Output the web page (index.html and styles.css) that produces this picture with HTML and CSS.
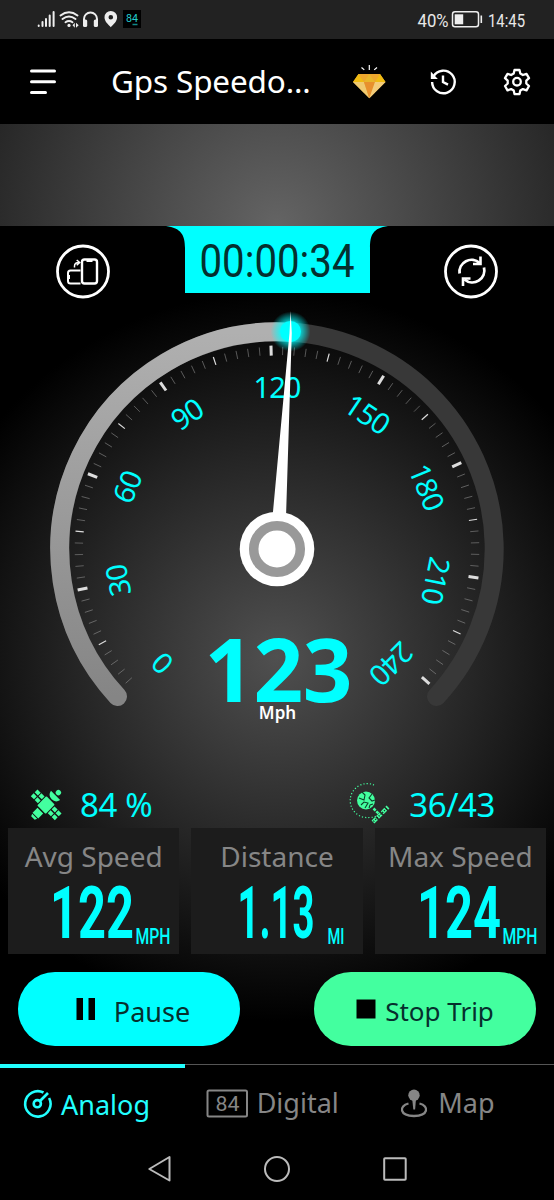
FILE: index.html
```html
<!DOCTYPE html>
<html lang="en">
<head>
    <meta charset="UTF-8">
    <meta name="viewport" content="width=device-width, initial-scale=1.0">
    <title>Gps Speedometer</title>
    <link rel="stylesheet" href="styles.css">
</head>
<body>
    <!-- Status bar -->
    <div class="status-bar">
        <svg class="status-icons" width="106" height="20" viewBox="36 9 106 20">
            <g stroke="#eee" stroke-width="2" stroke-linecap="round">
                <path d="M38.700 26v-.6M42.500 26v-4M46 26v-7M49.700 26v-10.500M53.600 26v-14"/>
            </g>
            <g fill="none" stroke="#eee" stroke-width="2" stroke-linecap="round">
                <path d="M60.500 15.500q8.500-6.500 17 0M62.500 19q6.500-5 13 0M65.500 22.200q3.500-2.400 7 0"/>
                <path d="M84 22v-3a6.500 6.500 0 0 1 13 0v3"/>
            </g>
            <circle cx="69" cy="25.400" r="1.600" fill="#eee"/>
            <path d="M74.800 22.800l-2.300 2.500 2.300 2.500zM76 22.800l2.700 2.500-2.700 2.500z" fill="#eee"/>
            <rect x="83" y="19.500" width="4.200" height="7.500" rx="1.600" fill="#eee"/>
            <rect x="93.800" y="19.500" width="4.200" height="7.500" rx="1.600" fill="#eee"/>
            <path fill-rule="evenodd" d="M110.800 11a6.300 6.300 0 0 1 6.300 6.300c0 4-3.500 7-6.300 10-2.800-3-6.300-6-6.300-10a6.300 6.300 0 0 1 6.300-6.300zm0 4a2.300 2.300 0 1 0 0 4.600 2.300 2.300 0 0 0 0-4.600z" fill="#eee"/>
            <rect x="123" y="10" width="18" height="18" fill="#000"/>
            <text class="seg" x="126" y="22" font-size="11" textLength="12" lengthAdjust="spacingAndGlyphs" fill="#2cc">84</text>
            <path d="M132.500 24.500h5" stroke="#188" stroke-width="1.500"/>
        </svg>
        <div class="status-right">
            <svg width="109" height="22" viewBox="416 9 109 22">
                <text x="417.500" y="26.500" textLength="31" lengthAdjust="spacingAndGlyphs">40%</text>
                <rect x="452.500" y="11.800" width="26" height="15" rx="2.500" fill="none" stroke="#eee" stroke-width="1.500"/>
                <rect x="454.700" y="14.300" width="8.500" height="10" fill="#eee"/>
                <path d="M481.300 15.500v7.500" stroke="#eee" stroke-width="1.600"/>
                <text x="488" y="26.500" textLength="37" lengthAdjust="spacingAndGlyphs">14:45</text>
            </svg>
        </div>
    </div>

    <!-- App bar -->
    <header class="app-bar">
        <svg width="28" height="28" viewBox="29 68 28 28" stroke="#fff" stroke-width="3" stroke-linecap="round">
            <path d="M31.500 71h23M31.500 81.700h23M31.500 92.400h14"/>
        </svg>
        <h1>Gps Speedo...</h1>
        <svg width="34" height="36" viewBox="352 64 34 36">
            <path d="M361.500 67.500l2.800 2.400M369.300 65v5M377 67.500l-2.800 2.400" stroke="#fff" stroke-width="1.200"/>
            <path d="M358.500 74h21.500l5.500 8-16.200 16.300L353 82z" fill="#e2a83a"/>
            <path d="M358.500 74h10.800l-5.300 8zM369.300 74h10.700l-5 8z" fill="#eda62d"/>
            <path d="M358.500 74l5.500 8h-11zM380 74l-5 8h10.500z" fill="#f0bb12"/>
            <path d="M369.300 74l5.700 8h-11z" fill="#e8b62b"/>
            <path d="M353 82h11l5.300 16.300z" fill="#f0ca70"/>
            <path d="M364 82h11l-5.700 16.300z" fill="#e8902d"/>
            <path d="M375 82h10.500l-16.200 16.300z" fill="#f3cc7a"/>
        </svg>
        <svg width="28" height="28" viewBox="429 68 28 28" fill="none" stroke="#fff" stroke-width="2.400">
            <path d="M433.500 76.500a11.300 11.300 0 1 1-1.400 5.500M443 75.500v6.500l5 2.600"/>
            <path d="M430.800 71.500v7.500h7z" fill="#fff" stroke="none"/>
        </svg>
        <svg width="30" height="30" viewBox="502 67 30 30" fill="none" stroke="#fff" stroke-width="2.300" stroke-linejoin="round">
            <path d="M514.500 70h5l.8 3.500 2.600 1.500 3.600-1.200 2.500 4.300-2.700 2.500v2.900l2.700 2.500-2.500 4.300-3.600-1.200-2.600 1.500-.8 3.500h-5l-.8-3.500-2.600-1.500-3.600 1.200-2.500-4.300 2.700-2.500v-2.900l-2.700-2.500 2.500-4.300 3.600 1.200 2.600-1.500z"/>
            <circle cx="517" cy="81.700" r="3.800"/>
        </svg>
    </header>

    <div class="banner"></div>

    <main class="dashboard">
        <!-- Timer and round buttons -->
        <div class="top-row">
            <svg class="round-btn" width="56" height="56" viewBox="55 244 56 56" fill="none" stroke="#fff" stroke-width="2">
                <circle cx="83" cy="271.500" r="25.500" stroke-width="2.800"/>
                <rect x="82" y="259.500" width="15" height="24" rx="2.500" stroke-width="2.400"/>
                <path d="M86.500 260.800h6" stroke-width="2.400"/>
                <path d="M80.500 270.500h-10a2.500 2.500 0 0 0-2.500 2.500v8a2.500 2.500 0 0 0 2.500 2.500h10M69 275v4"/>
                <path d="M74.500 267.500v-1.500q0-3.500 4.500-3.500M76.700 260l3 2.500-3 2.700" stroke-width="1.500"/>
            </svg>
            <div class="timer">
                <svg width="156" height="44" viewBox="199 238 156 44">
                    <text class="seg" x="199.500" y="276.500" font-size="47" textLength="155" lengthAdjust="spacingAndGlyphs" fill="#04302f">00:00:34</text>
                </svg>
            </div>
            <svg class="round-btn" width="56" height="56" viewBox="443 244 56 56" fill="none" stroke="#fff" stroke-width="2.800">
                <circle cx="471" cy="271.500" r="25.500"/>
                <path d="M459.600 273.500a12 12 0 0 1 20-10.500M484 267.500a12 12 0 0 1-19.500 12"/>
                <path d="M480.500 256.500v7.500h-7.500M463 286v-7.500h7.500" stroke-width="2.600"/>
            </svg>
        </div>

        <!-- Analog dial -->
        <svg class="dial" width="554" height="480" viewBox="0 300 554 480">
            <defs>
                <linearGradient id="arcFill" x1="0" y1="0" x2="0" y2="1">
                    <stop offset="0" stop-color="#b0b0b0"/>
                    <stop offset="1" stop-color="#858585"/>
                </linearGradient>
                <radialGradient id="glow">
                    <stop offset=".5" stop-color="#00ffff" stop-opacity=".75"/>
                    <stop offset="1" stop-color="#00ffff" stop-opacity="0"/>
                </radialGradient>
            </defs>
            <path d="M117.500 696.500A217.200 217.200 0 1 1 436.500 696.500" class="track"/>
            <path d="M117.500 696.500A217.200 217.200 0 0 1 290 332.200" class="progress"/>
            <g id="ticks"></g>
            <g id="labels"></g>
            <circle cx="290.500" cy="331.500" r="20" fill="url(#glow)"/>
            <circle cx="290.500" cy="331.500" r="10.500" fill="#00ffff"/>
            <path d="M290.600 311l1.200 22-5.800 184h-13.500l17-184z" fill="#fff"/>
            <circle cx="277" cy="549" r="37.300" fill="#fff"/>
            <circle cx="277" cy="549" r="23.300" fill="#fff" stroke="#999" stroke-width="9.500"/>
            <text class="speed" x="278.500" y="702" textLength="148">123</text>
            <text class="speed-unit" x="277.500" y="718.500">Mph</text>
        </svg>

        <!-- Satellite status -->
        <div class="satellites">
            <div class="sat-item">
                <svg width="32" height="32" viewBox="30 787 32 32" fill="#43ff9f">
                    <g transform="rotate(45 46 804)">
                        <path d="M29 799h4.500v4h-4.500zM34.500 799h4.500v4h-4.500zM29 804.500h4.500v4h-4.500zM34.500 804.500h4.500v4h-4.500z"/>
                        <path d="M53 799h4.500v4h-4.500zM58.500 799h4.500v4h-4.500zM53 804.500h4.500v4h-4.500zM58.500 804.500h4.500v4h-4.500z"/>
                        <rect x="40" y="797.500" width="12" height="13" rx="1"/>
                        <path d="M42 812h8v7h-8zM42.500 820h7l-1 2.500h-5zM39.500 790.500h13q-1 5.500-6.500 5.500t-6.500-5.500z"/>
                        <circle cx="46" cy="786.500" r="2.700"/>
                    </g>
                </svg>
                <span>84 %</span>
            </div>
            <div class="sat-item">
                <svg width="44" height="46" viewBox="345 779 44 46" fill="none" stroke="#43ff9f">
                    <path d="M372 783a17 17 0 1 0-5 32.500q6 0 8-2" stroke-width="1.200" stroke-dasharray="1.200 2"/>
                    <circle cx="364" cy="798.500" r="9" fill="#43ff9f" stroke="none"/>
                    <path d="M357 796l5 2 1-5-3-3M370 792l-3 4 3 3 3-1M359 803l3-3 4 1-3 5M367 806l1-3 3-1" stroke="#0d4029" stroke-width="1.100"/>
                    <path d="M371.500 806.500l6 6" stroke-width="2.500" stroke-dasharray="3 1"/>
                    <path d="M371 820l15-15" stroke-width="4" stroke-dasharray="5 1.500"/>
                    <path d="M371.500 819.500l14-14" stroke="#0e2219" stroke-width="1.500" stroke-dasharray="1 1.500"/>
                </svg>
                <span>36/43</span>
            </div>
        </div>

        <!-- Trip stats -->
        <div class="cards">
            <div class="card">
                <h2>Avg Speed</h2>
                <svg width="171" height="76" viewBox="8 878 171 76">
                    <text class="seg bold" x="50" y="938" textLength="84" lengthAdjust="spacingAndGlyphs">122</text>
                    <text class="seg unit" x="135.500" y="944" textLength="35" lengthAdjust="spacingAndGlyphs">MPH</text>
                </svg>
            </div>
            <div class="card">
                <h2>Distance</h2>
                <svg width="171" height="76" viewBox="191.500 878 171 76">
                    <text class="seg bold" x="238" y="938" textLength="77" lengthAdjust="spacingAndGlyphs">1.13</text>
                    <text class="seg unit" x="328" y="944" textLength="17" lengthAdjust="spacingAndGlyphs">MI</text>
                </svg>
            </div>
            <div class="card">
                <h2>Max Speed</h2>
                <svg width="171" height="76" viewBox="375 878 171 76">
                    <text class="seg bold" x="417" y="938" textLength="84" lengthAdjust="spacingAndGlyphs">124</text>
                    <text class="seg unit" x="502.500" y="944" textLength="35" lengthAdjust="spacingAndGlyphs">MPH</text>
                </svg>
            </div>
        </div>

        <div class="actions">
            <button class="btn pause">
                <svg width="20" height="22" viewBox="0 0 20 22"><path d="M.5 0h6.500v22H.5zM12.500 0h6.500v22h-6.500z"/></svg>
                <span>Pause</span>
            </button>
            <button class="btn stop">
                <svg width="20" height="20" viewBox="0 0 20 20"><path d="M.5.5h19v19H.5z"/></svg>
                <span>Stop Trip</span>
            </button>
        </div>
    </main>

    <!-- Bottom tabs -->
    <nav class="tabs">
        <a class="tab active">
            <svg width="30" height="30" viewBox="22 1087 30 30" fill="none" stroke="currentColor" stroke-width="2.600">
                <path d="M43.500 1090.500a12.700 12.700 0 1 0 5.600 5.500"/>
                <circle cx="37.300" cy="1101.700" r="3.600"/>
                <path d="M40 1099l8-8"/>
            </svg>
            <span>Analog</span>
        </a>
        <a class="tab">
            <svg width="42" height="28" viewBox="206 1087 42 28">
                <rect x="207.500" y="1088.500" width="39.500" height="26" rx="1.500" fill="none" stroke="currentColor" stroke-width="2"/>
                <text class="seg" x="215.500" y="1108.700" font-size="20.500" textLength="24" lengthAdjust="spacingAndGlyphs" fill="currentColor">84</text>
            </svg>
            <span>Digital</span>
        </a>
        <a class="tab">
            <svg width="30" height="30" viewBox="400 1086 30 30" fill="none" stroke="currentColor">
                <circle cx="415" cy="1093.300" r="5.700" fill="currentColor" stroke="none"/>
                <path d="M413.200 1097h3.800l-.9 10.500h-1.800z" fill="currentColor" stroke="none"/>
                <path d="M409.500 1101.500c-10 2.500-9 12.500 5.500 12.500s15.500-10 5.500-12.500" stroke-width="2.300"/>
            </svg>
            <span>Map</span>
        </a>
    </nav>

    <!-- System navigation -->
    <div class="system-nav">
        <svg width="24" height="28" viewBox="0 0 24 28"><path d="M22.500 2v23.500L2.300 14z"/></svg>
        <svg width="28" height="28" viewBox="0 0 28 28"><circle cx="14" cy="14" r="12"/></svg>
        <svg width="24" height="28" viewBox="0 0 24 28"><rect x="1.200" y="3.200" width="21.500" height="21.500" rx=".8"/></svg>
    </div>

    <script>
        var SVG_NS = 'http://www.w3.org/2000/svg';
        var cx = 277, cy = 549;

        // Scale marks, one every 3 mph
        var ticks = document.getElementById('ticks');
        for (var i = 1; i <= 80; i++) {
            var kind = i % 10 === 0 ? 'major' : (i % 5 === 0 ? 'mid' : 'minor');
            var line = document.createElementNS(SVG_NS, 'line');
            line.setAttribute('x1', cx);
            line.setAttribute('x2', cx);
            line.setAttribute('y1', cy - (kind === 'major' ? 203.5 : 202.3));
            line.setAttribute('y2', cy - (kind === 'major' ? 193.5 : 194));
            line.setAttribute('class', 'tick ' + kind);
            line.setAttribute('transform', 'rotate(' + (-134.9 + i * 3.33) + ' ' + cx + ' ' + cy + ')');
            ticks.appendChild(line);
        }

        // Numbers 0 - 240
        var labels = document.getElementById('labels');
        for (var n = 0; n <= 8; n++) {
            var text = document.createElementNS(SVG_NS, 'text');
            text.textContent = n * 30;
            text.setAttribute('x', cx);
            text.setAttribute('y', 397.5);
            text.setAttribute('class', 'label');
            text.setAttribute('transform', 'rotate(' + (n - 4) * 33.75 + ' ' + cx + ' ' + cy + ')');
            labels.appendChild(text);
        }
    </script>
</body>
</html>
```
FILE: styles.css
```css
* {
    box-sizing: border-box;
}

body {
    margin: 0;
    width: 554px;
    height: 1200px;
    overflow: hidden;
    background-color: #000;
    color: #fff;
    font-family: "Noto Sans", sans-serif;
}

svg {
    display: block;
    flex: none;
    overflow: visible;
}

h1, h2 {
    margin: 0;
    font-weight: 400;
}

.status-bar {
    display: flex;
    justify-content: space-between;
    height: 39px;
    padding: 9px 29px 0 36px;
    background-color: #222;
}

.status-right text {
    font-family: Roboto, sans-serif;
    font-size: 19px;
    fill: #e8e8e8;
}

.app-bar {
    display: flex;
    align-items: center;
    height: 85px;
    padding: 0 22px 0 29px;
}

.app-bar h1 {
    width: 241px;
    margin-left: 54px;
    padding-bottom: 2px;
    font-size: 31.5px;
    letter-spacing: -0.15px;
    line-height: 40px;
    white-space: nowrap;
}

.app-bar h1 + svg + svg {
    margin-left: 43px;
}

.app-bar svg:last-child {
    margin-left: auto;
}

.banner {
    height: 102px;
    background: radial-gradient(circle 330px at 277px 102px, #646464, #202020);
}

.dashboard {
    height: 838px;
    background: radial-gradient(circle 365px at 277px 430px, #505050, #252525 55%, #000);
}

.top-row {
    display: flex;
    justify-content: space-between;
    height: 74px;
    padding: 0 55px;
}

.round-btn {
    margin-top: 18px;
}

.timer {
    display: flex;
    justify-content: center;
    width: 222px;
    height: 67px;
    padding-top: 12px;
    background-color: #00ffff;
    clip-path: path("M0 0H222C207 2 204 9 204 22V67H19V22C19 9 15 2 0 0z");
}

.track, .progress {
    fill: none;
    stroke: #383838;
    stroke-width: 19;
    stroke-linecap: round;
}

.progress {
    stroke: url(#arcFill);
}

.tick {
    stroke: #999;
    stroke-width: 0.5;
}

.tick.mid {
    stroke: #ddd;
    stroke-width: 1.2;
}

.tick.major {
    stroke: #ddd;
    stroke-width: 3;
}

.label {
    fill: #00ffff;
    font-size: 29px;
    text-anchor: middle;
    letter-spacing: -1px;
}

.speed {
    fill: #00ffff;
    font-size: 87px;
    font-weight: 700;
    text-anchor: middle;
}

.speed-unit {
    fill: #fff;
    font-size: 17px;
    font-weight: 600;
    text-anchor: middle;
}

.satellites {
    display: flex;
    justify-content: space-between;
    height: 48px;
    padding: 0 59px 0 30px;
}

.sat-item {
    display: flex;
    align-items: center;
    gap: 18px;
    font-size: 33px;
    letter-spacing: -0.4px;
    color: #00ffff;
}

.cards {
    display: grid;
    grid-template-columns: repeat(3, 1fr);
    gap: 12px;
    height: 126px;
    padding: 0 8px;
}

.card {
    background-color: #1c1c1c;
}

.card h2 {
    height: 50px;
    padding-top: 8px;
    font-size: 28px;
    line-height: 40px;
    text-align: center;
    color: #868686;
}

.seg {
    font-family: Roboto, sans-serif;
}

.seg.bold {
    fill: #00ffff;
    font-size: 73px;
    font-weight: 700;
}

.seg.unit {
    fill: #00ffff;
    font-size: 22px;
    font-weight: 500;
}

.actions {
    display: flex;
    justify-content: space-between;
    padding: 18px 18px 0;
}

.btn {
    display: flex;
    align-items: center;
    justify-content: center;
    width: 222px;
    height: 74px;
    padding: 4px 0 0;
    border: none;
    border-radius: 37px;
    font-family: inherit;
    font-size: 27px;
    color: #062f2d;
}

.btn svg {
    margin-top: -4px;
    fill: #000;
}

.pause {
    gap: 18px;
    padding-left: 8px;
    background-color: #00ffff;
}

.stop {
    gap: 9px;
    font-size: 26px;
    background-color: #43ff9f;
}

.tabs {
    display: flex;
    height: 76px;
    border-top: 1px solid #555;
    color: #868686;
}

.tab {
    display: flex;
    align-items: center;
    gap: 9px;
    width: 185px;
    padding-left: 21px;
    font-size: 27px;
}

.tab:last-child {
    padding-left: 30px;
}

.tab.active {
    margin-top: -1px;
    padding-left: 22px;
    border-top: 4px solid #22ffff;
    color: #22ffff;
}

.system-nav {
    display: flex;
    align-items: center;
    justify-content: center;
    gap: 92px;
    height: 58px;
    fill: none;
    stroke: #bbb;
    stroke-width: 2;
    stroke-linejoin: round;
}
```
